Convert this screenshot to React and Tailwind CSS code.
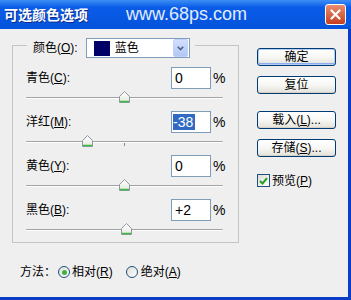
import React from 'react';

const Key = ({ k }) => <span className="underline underline-offset-[1px]">{k}</span>;

// 滑块：-100 ~ +100
const Slider = ({ value, tick }) => {
  const center = 98.5 + (value / 100) * 98.5;
  return (
    <div className="relative h-[21px] pt-[8px] mr-[2px]">
      <div className="h-[2px] border-t border-[#a3a3a3] border-b border-b-white rounded-full" />
      {tick && <div className="absolute top-[10px] left-[98px] w-[1px] h-[3px] bg-[#8a8a8a]" />}
      <svg
        className="absolute top-[2px]"
        style={{ left: center - 5.5 }}
        width="11"
        height="12"
        viewBox="0 0 11 12"
      >
        <defs>
          <linearGradient id="th" x1="0" y1="0" x2="0" y2="1">
            <stop offset="0" stopColor="#ffffff" />
            <stop offset="1" stopColor="#e6e6e0" />
          </linearGradient>
        </defs>
        <path d="M0.5 5.5 L5.5 0.5 L10.5 5.5 L10.5 11.5 L0.5 11.5 Z" fill="url(#th)" stroke="#8e99a8" />
        <path d="M1 10.5 H10" stroke="#3dbb3d" strokeWidth="1.5" />
      </svg>
    </div>
  );
};

const Channel = ({ name, k, value, selected, tick }) => (
  <div>
    <div className="flex items-center h-[22px]">
      <span className="flex-1">
        {name}(<Key k={k} />):
      </span>
      <div className="w-[40px] h-[22px] border border-[#7f9db9] bg-white flex items-center pl-[1px] text-[14px]">
        {selected ? (
          <span className="bg-[#316ac5] text-white leading-[16px] pr-[2px]">{value}</span>
        ) : (
          <span className="pl-[2px]">{value}</span>
        )}
      </div>
      <span className="w-[12px] ml-[2px] text-[14px]">%</span>
    </div>
    <Slider value={Number(value)} tick={tick} />
  </div>
);

const Btn = ({ children, primary, className = '' }) => (
  <button
    className={
      'h-[18px] w-[79px] rounded-[3px] border border-[#003c74] bg-linear-to-b from-white via-[#f7f7f4] to-[#e2e1d9] flex items-center justify-center leading-none ' +
      (primary ? 'shadow-[inset_0_0_0_1px_#b4cdf5,inset_0_-1px_0_1px_#89adf0] ' : 'shadow-[inset_0_-1px_0_#d6d0c5] ') +
      className
    }
  >
    {children}
  </button>
);

const Radio = ({ checked }) => (
  <span className="w-[12px] h-[12px] rounded-full border border-[#1c5180] bg-linear-to-br from-[#dcdcd6] to-white flex items-center justify-center">
    {checked && <span className="w-[5px] h-[5px] rounded-full bg-[#3ab53a]" />}
  </span>
);

export default function App() {
  return (
    <div className="w-[351px] h-[300px] flex flex-col text-[12px] text-black font-['Liberation_Sans','Noto_Sans_CJK_SC',sans-serif]">
      {/* 标题栏 */}
      <div className="h-[29px] shrink-0 flex items-center pl-[4px] pr-[5px] bg-linear-to-b from-[#3d8ef5] via-[#0a5ce8] via-25% to-[#0553dc]">
        <span className="text-[14px] font-bold text-white [text-shadow:1px_1px_0_#0b2c8f] font-['Noto_Sans_CJK_SC',sans-serif]">
          可选颜色选项
        </span>
        <span className="ml-[38px] text-[18px] text-[#e2edff] font-['Liberation_Sans',sans-serif]">
          www.68ps.com
        </span>
        <div className="ml-auto w-[21px] h-[21px] rounded-[3px] border border-white bg-linear-to-b from-[#ea8c6c] to-[#c53d1c] flex items-center justify-center">
          <svg width="11" height="11" viewBox="0 0 11 11">
            <path d="M1.5 1.5 L9.5 9.5 M9.5 1.5 L1.5 9.5" stroke="white" strokeWidth="2.2" strokeLinecap="round" />
          </svg>
        </div>
      </div>

      {/* 窗体 */}
      <div className="flex-1 flex flex-col bg-[#efefef] border-r-[3px] border-b-[3px] border-[#0a3cc8]">
        <div className="flex">
          <div className="pl-[12px] pt-[16px]">
            <div className="w-[227px] border border-[#c4c4c4] pl-[13px] pr-[13px]">
              {/* 颜色下拉 */}
              <div className="-mt-[8px] ml-[1px] w-fit pl-[6px] pr-[5px] bg-[#efefef] flex items-center h-[20px]">
                <span>
                  颜色(<Key k="O" />):
                </span>
                <div className="ml-[8px] w-[104px] h-[20px] border border-[#7f9db9] bg-white flex items-center">
                  <span className="ml-[7px] w-[16px] h-[15px] bg-[#000066]" />
                  <span className="ml-[5px]">蓝色</span>
                  <span className="ml-auto mr-[1px] w-[15px] h-[18px] rounded-[2px] border border-[#bed0fb] bg-linear-to-b from-[#d3e0fd] to-[#b2c7f5] flex items-center justify-center">
                    <svg width="7" height="5" viewBox="0 0 7 5">
                      <path d="M0.8 0.8 L3.5 3.6 L6.2 0.8" fill="none" stroke="#4d6185" strokeWidth="1.6" />
                    </svg>
                  </span>
                </div>
              </div>

              <div className="mt-[9px] flex flex-col gap-[1px]">
                <Channel name="青色" k="C" value="0" />
                <Channel name="洋红" k="M" value="-38" selected tick />
                <Channel name="黄色" k="Y" value="0" />
                <Channel name="黑色" k="B" value="+2" />
              </div>
            </div>
          </div>

          {/* 按钮 */}
          <div className="ml-[18px] pt-[19px] flex flex-col">
            <Btn primary>确定</Btn>
            <Btn className="mt-[10px]">复位</Btn>
            <Btn className="mt-[17px]">
              载入(<Key k="L" />)...
            </Btn>
            <Btn className="mt-[10px]">
              存储(<Key k="S" />)...
            </Btn>
            <label className="mt-[16px] flex items-center h-[15px]">
              <span className="w-[13px] h-[13px] border border-[#1c5180] bg-linear-to-br from-[#dcdcd6] to-white flex items-center justify-center">
                <svg width="9" height="8" viewBox="0 0 9 8">
                  <path d="M1 4 L3.5 6.5 L8 1.2" fill="none" stroke="#21a121" strokeWidth="2" />
                </svg>
              </span>
              <span className="ml-[2px]">
                预览(<Key k="P" />)
              </span>
            </label>
          </div>
        </div>

        {/* 方法 */}
        <div className="mt-[21px] pl-[20px] flex items-center h-[16px]">
          <span>方法：</span>
          <span className="ml-[2px]">
            <Radio checked />
          </span>
          <span className="ml-[2px]">
            相对(<Key k="R" />)
          </span>
          <span className="ml-[13px]">
            <Radio />
          </span>
          <span className="ml-[3px]">
            绝对(<Key k="A" />)
          </span>
        </div>
      </div>
    </div>
  );
}
